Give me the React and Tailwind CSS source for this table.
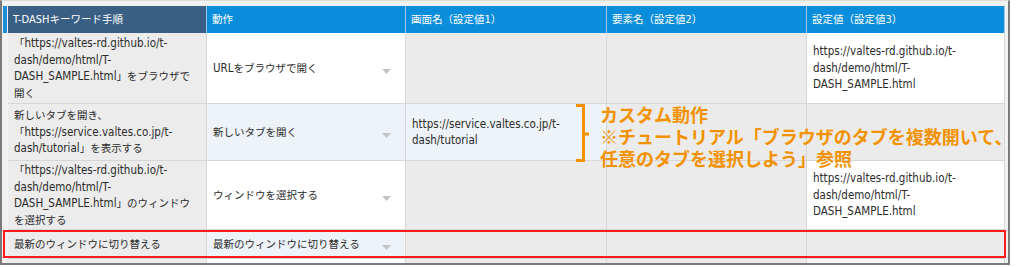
import React from "react";

const font = { fontFamily: '"DejaVu Sans Condensed", "Liberation Sans", "Noto Sans CJK JP", sans-serif' };

const W = ["w-[199px]", "w-[199px]", "w-[201px]", "w-[200px]", "w-[198px]"];

// latin runs are set a little larger than the kana/kanji, as in the original
function Txt({ s, big = "text-[11.5px]" }) {
  return s.split(/([\x20-\x7E]+)/).map((p, i) =>
    /^[\x20-\x7E]+$/.test(p) ? (
      <span key={i} className={big}>
        {p}
      </span>
    ) : (
      <span key={i} style={{ fontFamily: '"Noto Sans CJK JP", sans-serif' }}>
        {p}
      </span>
    )
  );
}

function Lines({ list }) {
  return list.map((l, i) => (
    <div key={i} className="h-[16.5px] whitespace-nowrap">
      <Txt s={l} />
    </div>
  ));
}

function Arrow() {
  return (
    <svg width="9" height="5" viewBox="0 0 9 5" className="absolute right-[14px] top-1/2 mt-[1px]">
      <path d="M0 0 L9 0 L4.5 5 Z" fill="#c4c4c4" />
    </svg>
  );
}

function Cell({ w, bg, lines, arrow, h }) {
  return (
    <div
      className={`relative flex items-center overflow-hidden border-r border-b border-[#d6d6d6] pl-[6px] text-[10.5px] leading-[16.5px] text-[#2b2b2b] ${w} ${bg} ${h}`}
    >
      <div>
        <Lines list={lines} />
      </div>
      {arrow && <Arrow />}
    </div>
  );
}

const url1 = ["https://valtes-rd.github.io/t-", "dash/demo/html/T-", "DASH_SAMPLE.html"];

const rows = [
  {
    h: "h-[71px]",
    bgs: ["bg-[#ececec]", "bg-white", "bg-[#ebebeb]", "bg-[#ebebeb]", "bg-white"],
    cells: [
      ["「https://valtes-rd.github.io/t-", "dash/demo/html/T-", "DASH_SAMPLE.html」をブラウザで", "開く"],
      ["URLをブラウザで開く"],
      [],
      [],
      url1,
    ],
  },
  {
    h: "h-[57px]",
    bgs: ["bg-[#ececec]", "bg-[#eef3f9]", "bg-[#eef3f9]", "bg-[#ebebeb]", "bg-[#ebebeb]"],
    cells: [
      ["新しいタブを開き、", "「https://service.valtes.co.jp/t-", "dash/tutorial」を表示する"],
      ["新しいタブを開く"],
      ["https://service.valtes.co.jp/t-", "dash/tutorial"],
      [],
      [],
    ],
  },
  {
    h: "h-[69px]",
    bgs: ["bg-[#ececec]", "bg-white", "bg-[#ebebeb]", "bg-[#ebebeb]", "bg-white"],
    cells: [
      ["「https://valtes-rd.github.io/t-", "dash/demo/html/T-", "DASH_SAMPLE.html」のウィンドウ", "を選択する"],
      ["ウィンドウを選択する"],
      [],
      [],
      url1,
    ],
  },
  {
    h: "h-[29px]",
    bgs: ["bg-[#ececec]", "bg-[#eef3f9]", "bg-[#ebebeb]", "bg-[#ebebeb]", "bg-[#ebebeb]"],
    cells: [["最新のウィンドウに切り替える"], ["最新のウィンドウに切り替える"], [], [], []],
  },
  {
    h: "h-[10px]",
    bgs: ["bg-[#ececec]", "bg-white", "bg-[#ebebeb]", "bg-[#ebebeb]", "bg-[#f6f6f6]"],
    cells: [[], [], [], [], []],
  },
];

const headers = ["T-DASHキーワード手順", "動作", "画面名（設定値1）", "要素名（設定値2）", "設定値（設定値3）"];

export default function App() {
  return (
    <div className="relative h-[267px] w-[1024px] overflow-hidden bg-white" style={font}>
      <div className="h-[265px] w-[1010px] overflow-hidden border-l-2 border-r-2 border-b-2 border-[#7a7a7a] border-t border-t-[#dcdcdc] bg-[#f1f1f1] pt-[5px]">
        {/* header */}
        <div className="flex h-[27px]">
          <div className="mx-[1px] w-[4px] bg-[#1b8fdc]" />
          <div className="flex">
            {headers.map((t, i) => (
              <div
                key={i}
                className={`flex items-center whitespace-nowrap border-r border-[#9cc7e6] pl-[5px] text-[10.5px] text-white ${W[i]} ${
                  i === 0 ? "bg-[#3a5f84]" : "bg-[#0a8ddb]"
                }`}
              >
                <div>
                  <Txt s={t} big="text-[11px]" />
                </div>
              </div>
            ))}
          </div>
        </div>
        {rows.map((r, ri) => (
          <div key={ri} className="flex">
            <div className="w-[6px] bg-[#f1f1f1]" />
            {r.cells.map((c, ci) => (
              <Cell key={ci} w={W[ci]} bg={r.bgs[ci]} h={r.h} lines={c} arrow={ci === 1 && ri < 4} />
            ))}
          </div>
        ))}
      </div>

      {/* highlighted row */}
      <div className="absolute left-[3px] top-[230px] h-[28px] w-[1003px] border-2 border-[#ff1a1a]" />

      {/* annotation */}
      <div className="absolute left-[575px] top-[104px] flex">
        <svg width="16" height="58" viewBox="0 0 16 58">
          <path d="M1 1.5 H8.5 V56.5 H1 M8.5 30 H14" fill="none" stroke="#f39200" strokeWidth="3" />
        </svg>
        <div
          className="ml-[9px] -mt-[1px] whitespace-nowrap text-[18px] font-bold leading-[22px] text-[#f39200]"
          style={{ fontFamily: '"Noto Sans CJK JP", sans-serif' }}
        >
          カスタム動作
          <br />
          ※チュートリアル「ブラウザのタブを複数開いて、
          <br />
          任意のタブを選択しよう」参照
        </div>
      </div>
    </div>
  );
}
